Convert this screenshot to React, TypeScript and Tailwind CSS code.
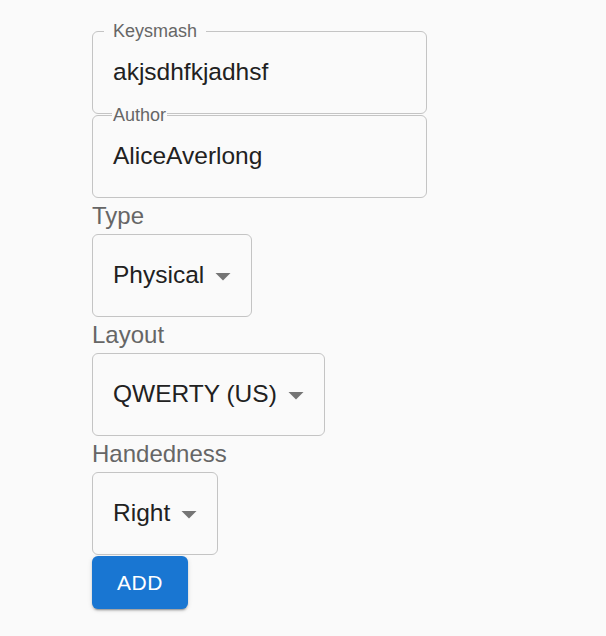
import React from "react";

const FONT = { fontFamily: '"Liberation Sans", Arial, sans-serif' };

function OutlinedField({ label, value, notchPad }: { label: string; value: string; notchPad: string }) {
  return (
    <div className="relative h-[83px] w-[335px] rounded-[6px] border border-[#c4c4c4] flex items-center pl-[20px]">
      <span
        className={`absolute top-[-11px] bg-[#fafafa] text-[18px] leading-[21px] text-[#666666] ${notchPad}`}
      >
        {label}
      </span>
      <span className="text-[24.5px] text-[#212121]">{value}</span>
    </div>
  );
}

function ArrowDrop() {
  return (
    <svg
      viewBox="0 0 24 24"
      className="absolute right-[10px] top-1/2 -translate-y-1/2 w-[36px] h-[36px]"
      fill="#757575"
    >
      <path d="M7 10l5 5 5-5z" />
    </svg>
  );
}

function SelectField({ label, value }: { label: string; value: string }) {
  return (
    <div>
      <div className="h-[36px] leading-[36px] text-[24px] text-[#666666]">{label}</div>
      <div className="relative inline-flex h-[83px] items-center rounded-[6px] border border-[#c4c4c4] pl-[20px] pr-[47px]">
        <span className="text-[24.5px] text-[#212121]">{value}</span>
        <ArrowDrop />
      </div>
    </div>
  );
}

export default function App() {
  return (
    <div className="min-h-[636px] bg-[#fafafa] pl-[92px] pt-[31px]" style={FONT}>
      <div className="flex flex-col">
        <OutlinedField label="Keysmash" value="akjsdhfkjadhsf" notchPad="left-[11px] px-[9px]" />
        <div className="mt-[1px]">
          <OutlinedField label="Author" value="AliceAverlong" notchPad="left-[19px] px-[1px]" />
        </div>
        <SelectField label="Type" value="Physical" />
        <SelectField label="Layout" value="QWERTY (US)" />
        <SelectField label="Handedness" value="Right" />
        <div className="mt-[1px]">
          <button className="h-[53px] min-w-[96px] rounded-[6px] bg-[#1976d2] px-[24px] text-[21px] uppercase tracking-[0.6px] text-white shadow-[0_3px_1px_-2px_rgba(0,0,0,0.2),0_2px_2px_0_rgba(0,0,0,0.14),0_1px_5px_0_rgba(0,0,0,0.12)]">
            Add
          </button>
        </div>
      </div>
    </div>
  );
}
